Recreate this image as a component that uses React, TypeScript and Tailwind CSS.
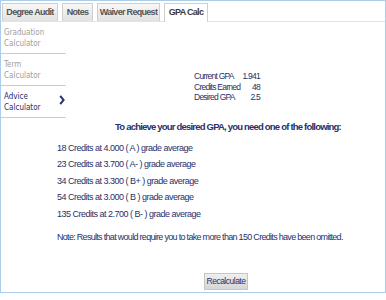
const NAVY = "text-[#27316a]";

const tabs = [
  { label: "Degree Audit", width: "w-[56px]", active: false },
  { label: "Notes", width: "w-[31px]", active: false },
  { label: "Waiver Request", width: "w-[63px]", active: false },
  { label: "GPA Calc", width: "w-[44px]", active: true },
];

const sideItems = [
  { lines: ["Graduation", "Calculator"], active: false },
  { lines: ["Term", "Calculator"], active: false },
  { lines: ["Advice", "Calculator"], active: true },
];

const results = [
  "18 Credits at 4.000 ( A ) grade average",
  "23 Credits at 3.700 ( A- ) grade average",
  "34 Credits at 3.300 ( B+ ) grade average",
  "54 Credits at 3.000 ( B ) grade average",
  "135 Credits at 2.700 ( B- ) grade average",
];

const stats = [
  ["Current GPA", "1.941"],
  ["Credits Earned", "48"],
  ["Desired GPA", "2.5"],
];

const sans = "font-['Liberation_Sans',Arial,sans-serif]";
const side = "font-['DejaVu_Sans_Condensed','DejaVu_Sans',sans-serif]";

const App = () => {
  return (
    <div className="w-[386px] h-[300px] bg-white">
      <div className="h-[293px] border border-[#abcdec] flex flex-col">
        {/* tabs */}
        <div className="flex items-end gap-[4px] pl-[1px] h-[21px] border-b border-[#e3e3e3]">
          {tabs.map((t) => (
            <div
              key={t.label}
              className={`${t.width} flex items-center justify-center border border-b-0 border-[#cfcfcf] text-[9px] font-bold tracking-[-0.7px] ${sans} ${
                t.active
                  ? "bg-white text-[#3a3a3a] -mb-px h-[19px]"
                  : "h-[18px] bg-gradient-to-b from-[#f7f7f7] to-[#e2e2e2] text-[#555]"
              }`}
            >
              {t.label}
            </div>
          ))}
        </div>

        <div className="flex">
          {/* sidebar */}
          <div className="w-[65px] flex flex-col">
            {sideItems.map((s) => (
              <div
                key={s.lines[0]}
                className={`h-[32px] pt-[5px] border-b border-[#cdcdcd] flex justify-between pl-[3px] pr-[1px] ${side} text-[8px] leading-[11px] ${
                  s.active ? NAVY : "text-[#a0a0a0]"
                }`}
              >
                <div className="flex flex-col">
                  {s.lines.map((l) => (
                    <span key={l}>{l}</span>
                  ))}
                </div>
                {s.active && (
                  <svg width="6" height="10" viewBox="0 0 6 10" className="mt-[4px]">
                    <path d="M1.2 0.8 L4.6 5 L1.2 9.2" fill="none" stroke="#2b346e" strokeWidth="2" />
                  </svg>
                )}
              </div>
            ))}
          </div>

          {/* main */}
          <div className={`flex-1 flex flex-col items-center ${sans} ${NAVY}`}>
            <div className="mt-[49px] ml-[3px] flex flex-col text-[8.5px] leading-[10.5px] tracking-[-0.75px]">
              {stats.map(([k, v]) => (
                <div key={k} className="flex whitespace-nowrap">
                  <span className="w-[46px]">{k}</span>
                  <span className="w-[20px] text-right">{v}</span>
                </div>
              ))}
            </div>
            <div className="mt-[17px] ml-[5px] text-[9.5px] font-bold leading-[13px] tracking-[-0.8px] whitespace-nowrap">
              To achieve your desired GPA, you need one of the following:
            </div>
          </div>
        </div>

        {/* results */}
        <div className={`pl-[56px] mt-[7px] flex flex-col ${sans} ${NAVY} text-[9px] leading-[16.5px] tracking-[-0.5px]`}>
          {results.map((r) => (
            <div key={r}>{r}</div>
          ))}
          <div className="mt-[7px] tracking-[-0.7px] whitespace-nowrap">
            Note: Results that would require you to take more than 150 Credits have been omitted.
          </div>
        </div>

        <div className="flex justify-center pl-[66px] mt-auto mb-[2px]">
          <button
            className={`h-[17px] w-[44px] border border-[#c6c6c6] bg-gradient-to-b from-[#efefef] to-[#d6d6d6] text-[8.5px] tracking-[-0.5px] ${sans} ${NAVY}`}
          >
            Recalculate
          </button>
        </div>
      </div>
    </div>
  );
};

export default App;
